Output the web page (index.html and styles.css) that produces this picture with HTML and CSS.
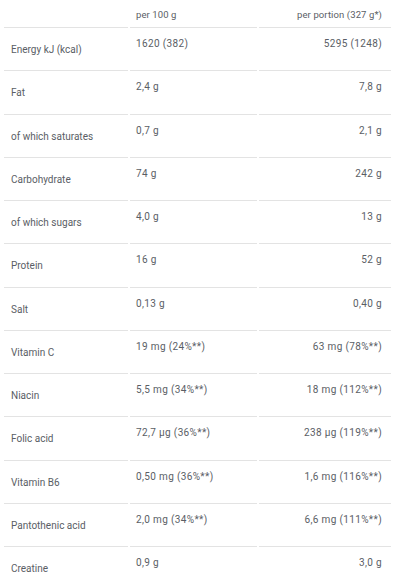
FILE: index.html
```html
<!DOCTYPE html>
<html lang="en">
<head>
<meta charset="utf-8">
<title>Nutrition facts</title>
<link rel="stylesheet" href="styles.css">
</head>
<body>
<div class="table">
  <div class="row head">
    <div class="cell label"></div>
    <div class="cell mid">per 100 g</div>
    <div class="cell right">per portion (327 g*)</div>
  </div>
  <div class="row"><div class="cell label">Energy kJ (kcal)</div><div class="cell mid">1620 (382)</div><div class="cell right">5295 (1248)</div></div>
  <div class="row"><div class="cell label">Fat</div><div class="cell mid">2,4 g</div><div class="cell right">7,8 g</div></div>
  <div class="row"><div class="cell label">of which saturates</div><div class="cell mid">0,7 g</div><div class="cell right">2,1 g</div></div>
  <div class="row"><div class="cell label">Carbohydrate</div><div class="cell mid">74 g</div><div class="cell right">242 g</div></div>
  <div class="row"><div class="cell label">of which sugars</div><div class="cell mid">4,0 g</div><div class="cell right">13 g</div></div>
  <div class="row"><div class="cell label">Protein</div><div class="cell mid">16 g</div><div class="cell right">52 g</div></div>
  <div class="row"><div class="cell label">Salt</div><div class="cell mid">0,13 g</div><div class="cell right">0,40 g</div></div>
  <div class="row"><div class="cell label">Vitamin C</div><div class="cell mid">19 mg (24%**)</div><div class="cell right">63 mg (78%**)</div></div>
  <div class="row"><div class="cell label">Niacin</div><div class="cell mid">5,5 mg (34%**)</div><div class="cell right">18 mg (112%**)</div></div>
  <div class="row"><div class="cell label">Folic acid</div><div class="cell mid">72,7 µg (36%**)</div><div class="cell right">238 µg (119%**)</div></div>
  <div class="row"><div class="cell label">Vitamin B6</div><div class="cell mid">0,50 mg (36%**)</div><div class="cell right">1,6 mg (116%**)</div></div>
  <div class="row"><div class="cell label">Pantothenic acid</div><div class="cell mid">2,0 mg (34%**)</div><div class="cell right">6,6 mg (111%**)</div></div>
  <div class="row"><div class="cell label">Creatine</div><div class="cell mid">0,9 g</div><div class="cell right">3,0 g</div></div>
</div>
</body>
</html>
```
FILE: styles.css
```css
html, body {
  margin: 0;
  padding: 0;
  background: #ffffff;
}
body {
  font-family: Roboto, "Liberation Sans", sans-serif;
  color: #5a5e65;
  font-size: 10px;
  overflow: hidden;
}
.table {
  margin-left: 4px;
  width: 387px;
}
.row {
  display: grid;
  grid-template-columns: 124px 127px 132px;
  column-gap: 2px;
  height: 43.25px;
}
.row.head {
  height: 27px;
}
.cell {
  box-sizing: border-box;
  border-top: 1px solid #e3e3e3;
  line-height: 12px;
}
.head .cell {
  border-top: none;
  padding-top: 9px;
  font-size: 9.5px;
  letter-spacing: 0.1px;
}
.label {
  padding-left: 7px;
  padding-top: 16px;
}
.mid {
  padding-left: 6px;
  padding-top: 10px;
  letter-spacing: 0.35px;
}
.right {
  text-align: right;
  padding-right: 9px;
  padding-top: 10px;
  letter-spacing: 0.35px;
}
```
